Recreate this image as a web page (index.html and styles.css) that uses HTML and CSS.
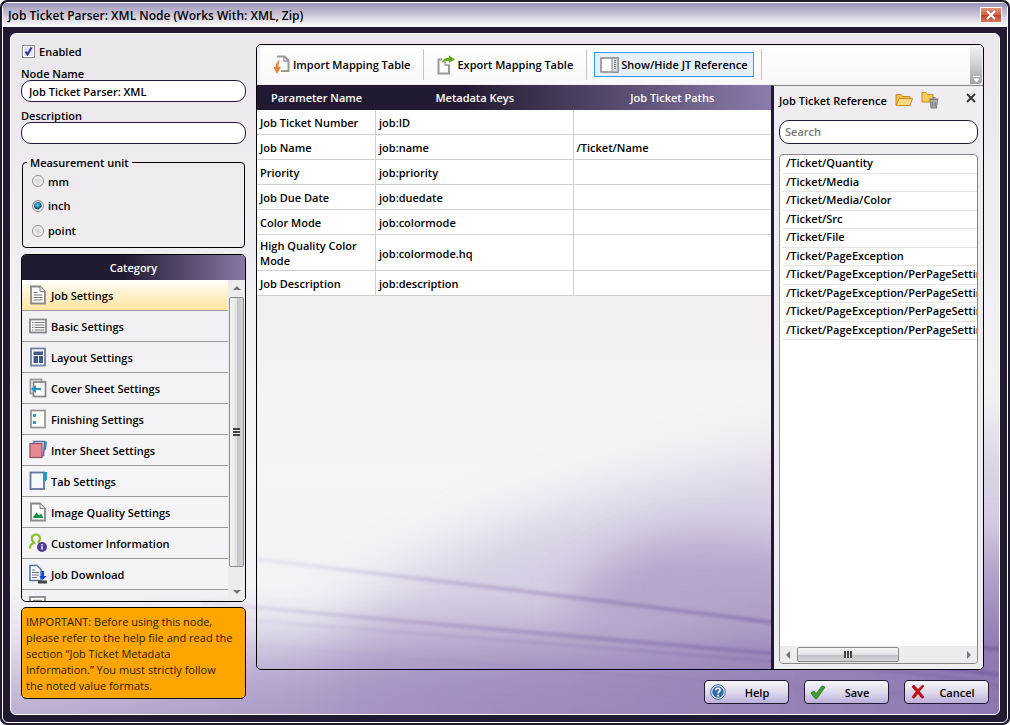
FILE: index.html
```
<!DOCTYPE html>
<html lang="en">
<head>
    <meta charset="UTF-8">
    <meta name="viewport" content="width=device-width, initial-scale=1.0">
    <title>Job Ticket Parser: XML Node</title>
    <link rel="stylesheet" href="styles.css">
</head>
<body>

<div class="window">
    <div class="frame">
        <header class="titlebar">
            <h1>Job Ticket Parser: XML Node (Works With: XML, Zip)</h1>
            <button type="button" class="window-close" aria-label="Close">
                <svg width="10" height="10" viewBox="0 0 10 10"><path d="M1 1l8 8M9 1l-8 8" stroke="#fff" stroke-width="2"/></svg>
            </button>
        </header>

        <main class="content">
            <!-- Purple wave background -->
            <svg class="backdrop" viewBox="10 33 990 681" preserveAspectRatio="none" aria-hidden="true">
                <defs>
                    <linearGradient id="base" x1="0" y1="0" x2="0" y2="1">
                        <stop offset="0" stop-color="#ece6ed"/>
                        <stop offset="0.65" stop-color="#f5f5f7"/>
                        <stop offset="0.82" stop-color="#f3f2f6"/>
                        <stop offset="1" stop-color="#cfc7de"/>
                    </linearGradient>
                    <linearGradient id="line" x1="0" y1="0" x2="1" y2="0">
                        <stop offset="0" stop-color="#8a74ad" stop-opacity="0.1"/>
                        <stop offset="1" stop-color="#765ea2" stop-opacity="0.85"/>
                    </linearGradient>
                    <linearGradient id="wave" x1="0" y1="0" x2="1" y2="0">
                        <stop offset="0" stop-color="#a08dc0" stop-opacity="0.35"/>
                        <stop offset="0.45" stop-color="#9c89bd" stop-opacity="0.85"/>
                        <stop offset="1" stop-color="#8b75af"/>
                    </linearGradient>
                    <filter id="soft" x="-20%" y="-40%" width="140%" height="180%"><feGaussianBlur stdDeviation="28"/></filter>
                    <filter id="softer" x="-20%" y="-40%" width="140%" height="180%"><feGaussianBlur stdDeviation="20"/></filter>
                    <filter id="thin" x="-5%" y="-20%" width="110%" height="140%"><feGaussianBlur stdDeviation="1.5"/></filter>
                </defs>
                <rect x="10" y="33" width="990" height="681" fill="url(#base)"/>
                <path d="M340 620C480 500 780 440 1060 430V760H340z" fill="#b3a3cb" opacity="0.45" filter="url(#soft)"/>
                <path d="M560 620C600 540 680 520 800 550L1060 540V640z" fill="#a18dbf" opacity="0.6" filter="url(#softer)"/>
                <path d="M-60 690C200 650 400 645 600 640L1060 600V800H-60z" fill="url(#wave)" filter="url(#soft)"/>
                <g fill="none" stroke="url(#line)" filter="url(#thin)">
                    <path d="M256 559Q520 590 770 622T1000 648" stroke-width="4"/>
                    <path d="M200 602Q520 632 770 653T1000 676" stroke-width="4"/>
                    <path d="M200 616Q520 642 770 661T1000 690" stroke-width="3" opacity="0.6"/>
                    <path d="M200 640Q520 670 1000 700" stroke-width="3" opacity="0.3"/>
                </g>
            </svg>

            <aside class="sidebar">
                <label class="check"><input type="checkbox" checked>Enabled</label>

                <label class="field-label" for="nodeName">Node Name</label>
                <input type="text" class="text-box" id="nodeName" value="Job Ticket Parser: XML">

                <label class="field-label description-label" for="description">Description</label>
                <input type="text" class="text-box" id="description">

                <fieldset class="units">
                    <legend>Measurement unit</legend>
                    <label><input type="radio" name="unit">mm</label>
                    <label><input type="radio" name="unit" checked>inch</label>
                    <label><input type="radio" name="unit">point</label>
                </fieldset>

                <section class="category">
                    <h2>Category</h2>
                    <div class="category-body">
                        <ul class="category-list">
                            <li><button type="button" class="selected">
                                <svg width="18" height="20" viewBox="0 0 18 20"><path d="M2 1.500h9l5 5v12H2z" fill="#fff" stroke="#888" stroke-width="1.800"/><path d="M11 1.500v5h5" fill="#ddd" stroke="#888"/><path d="M4.500 7.500h4M4.500 10h9M4.500 12.500h9M4.500 15h9" stroke="#777" stroke-width="1.200"/></svg>
                                Job Settings</button></li>
                            <li><button type="button">
                                <svg width="18" height="20" viewBox="0 0 18 20"><rect x="1" y="3.500" width="16" height="13" fill="#fff" stroke="#888" stroke-width="1.800"/><path d="M3 6.500h1.500M3 9h1.500M3 11.500h1.500M3 14h1.500M5.500 6.500h10M5.500 9h10M5.500 11.500h10M5.500 14h10" stroke="#777" stroke-width="1.200"/></svg>
                                Basic Settings</button></li>
                            <li><button type="button">
                                <svg width="18" height="20" viewBox="0 0 18 20"><rect x="2" y="1.500" width="14" height="17" fill="#fff" stroke="#6d7fa8" stroke-width="1.800"/><path d="M4.500 4.500h9.500v3.500H4.500zM4.500 9h4.500v7H4.500zM10 9h4v7h-4z" fill="#3f568f"/></svg>
                                Layout Settings</button></li>
                            <li><button type="button">
                                <svg width="18" height="20" viewBox="0 0 18 20"><rect x="1.500" y="1.500" width="11" height="14" fill="#fff" stroke="#999" stroke-width="1.800"/><rect x="4.500" y="4" width="12" height="14.500" fill="#fff" stroke="#888" stroke-width="1.800"/><path d="M2 11l5-4v3h5v2H7v3z" fill="#1d94d2"/></svg>
                                Cover Sheet Settings</button></li>
                            <li><button type="button">
                                <svg width="18" height="20" viewBox="0 0 18 20"><rect x="2" y="1.500" width="14" height="17" fill="#fff" stroke="#999" stroke-width="1.800"/><rect x="4" y="5" width="3" height="3" fill="#2a9fd6"/><rect x="4" y="12" width="3" height="3" fill="#2a9fd6"/></svg>
                                Finishing Settings</button></li>
                            <li><button type="button">
                                <svg width="18" height="20" viewBox="0 0 18 20"><path d="M14 1.500h4l-1 8-3 2z" fill="#1d9ccc"/><path d="M5 1.500h10.500l-1 14H5z" fill="#fff" stroke="#5a6f9c" stroke-width="1.500"/><rect x="1" y="3.500" width="12" height="14" fill="#e58a90" stroke="#8a5a70" stroke-width="1.300"/></svg>
                                Inter Sheet Settings</button></li>
                            <li><button type="button">
                                <svg width="18" height="20" viewBox="0 0 18 20"><path d="M13 1.500h5v7l-3 3z" fill="#1d9ccc"/><rect x="1.500" y="1.500" width="13.500" height="16.500" fill="#f4f9ff" stroke="#6578a4" stroke-width="1.800"/><path d="M14 1h4v7l-2 2z" fill="#1d9ccc"/></svg>
                                Tab Settings</button></li>
                            <li><button type="button">
                                <svg width="18" height="20" viewBox="0 0 18 20"><path d="M2 1.500h9l5 5v12H2z" fill="#fff" stroke="#888" stroke-width="1.800"/><path d="M11 1.500v5h5" fill="#ddd" stroke="#888"/><path d="M3.500 16l4-5.500 2.500 3 2-2 2.500 4.500z" fill="#119447"/></svg>
                                Image Quality Settings</button></li>
                            <li><button type="button">
                                <svg width="18" height="20" viewBox="0 0 18 20"><path d="M1 15.500c0-4 2-5 4-5.500C1 6 3 1.500 7 1.500S12.500 6 9 10" fill="none" stroke="#8cbf26" stroke-width="2.200"/><circle cx="13" cy="14" r="5" fill="#503a9b"/><path d="M13 11v1.500M13 13.200v3.300" stroke="#fff" stroke-width="1.500"/></svg>
                                Customer Information</button></li>
                            <li><button type="button">
                                <svg width="18" height="20" viewBox="0 0 18 20"><path d="M1 1.500h7l4 4v11H1z" fill="#fff" stroke="#5a6f9c" stroke-width="1.500"/><path d="M3 6h3M3 8.500h7M3 11h7M3 13.500h5" stroke="#5a6f9c" stroke-width="1.200"/><path d="M12.500 7h2.500v5h2.500l-3.700 4-3.700-4h2.400z" fill="#1243e8"/><rect x="9" y="16.500" width="9" height="3" fill="#444"/></svg>
                                Job Download</button></li>
                            <li><button type="button" aria-label="More settings">
                                <svg width="18" height="20" viewBox="0 0 18 20"><rect x="1" y="2" width="15" height="16" fill="#fff" stroke="#888" stroke-width="1.800"/><path d="M4 5.500h9M4 8.500h9" stroke="#888" stroke-width="1.500"/></svg>
                            </button></li>
                        </ul>
                        <div class="scroll vertical" aria-hidden="true">
                            <span class="arrow up"></span>
                            <span class="thumb"><i></i></span>
                            <span class="arrow down"></span>
                        </div>
                    </div>
                </section>

                <p class="notice">IMPORTANT: Before using this node,<br>please refer to the help file and read the<br>section “Job Ticket Metadata<br>Information.” You must strictly follow<br>the noted value formats.</p>
            </aside>

            <section class="mapping">
                <div class="toolbar">
                    <div class="tray">
                        <button type="button" class="tool">
                            <svg width="18" height="20" viewBox="0 0 18 20"><path d="M4 1.500h7.500l4 4V16H8" fill="#fff" stroke="#999" stroke-width="2"/><path d="M11 2v4h4.500" fill="none" stroke="#999" stroke-width="1.300"/><path d="M7 4.500C4.500 6 2.500 9 2.500 12H0.500L4 19l4-7H5.500C5.500 9 6 7 7 4.500z" fill="#f28234"/></svg>
                            Import Mapping Table</button>
                        <span class="separator"></span>
                        <button type="button" class="tool">
                            <svg width="18" height="20" viewBox="0 0 18 20"><path d="M5 4.500H1.500V18.500H12V9.500" fill="#fff" stroke="#999" stroke-width="2"/><path d="M8 6v4h4" fill="none" stroke="#999" stroke-width="1.300"/><path d="M4.500 8C6 4 9 2.800 12 2.800V0.500L18 4.200l-6 3.800V5.800C9 5.800 7 6 4.500 8z" fill="#5aad12"/></svg>
                            Export Mapping Table</button>
                        <span class="separator"></span>
                        <button type="button" class="tool active">
                            <svg width="19" height="16" viewBox="0 0 19 16"><rect x="1" y="1" width="17" height="14" fill="#fff" stroke="#888" stroke-width="1.500"/><rect x="12" y="1" width="6" height="14" fill="#ddd" stroke="#888"/><path d="M15 3v10" stroke="#555" stroke-width="1.500" stroke-dasharray="1 1"/></svg>
                            Show/Hide JT Reference</button>
                        <span class="separator"></span>
                    </div>
                    <span class="grip"><svg width="7" height="6" viewBox="0 0 7 6"><path d="M0 0.500h7M1 3h5L3.500 6z" stroke="#fff" fill="#fff"/></svg></span>
                </div>

                <div class="panes">
                    <div class="grid-pane">
                        <table>
                            <colgroup><col class="col-name"><col class="col-key"><col class="col-path"></colgroup>
                            <thead>
                                <tr><th>Parameter Name</th><th>Metadata Keys</th><th>Job Ticket Paths</th></tr>
                            </thead>
                            <tbody>
                                <tr><td>Job Ticket Number</td><td>job:ID</td><td></td></tr>
                                <tr><td>Job Name</td><td>job:name</td><td>/Ticket/Name</td></tr>
                                <tr><td>Priority</td><td>job:priority</td><td></td></tr>
                                <tr><td>Job Due Date</td><td>job:duedate</td><td></td></tr>
                                <tr><td>Color Mode</td><td>job:colormode</td><td></td></tr>
                                <tr><td>High Quality Color Mode</td><td>job:colormode.hq</td><td></td></tr>
                                <tr><td>Job Description</td><td>job:description</td><td></td></tr>
                            </tbody>
                        </table>
                    </div>

                    <aside class="reference">
                        <div class="reference-head">
                            <h2>Job Ticket Reference</h2>
                            <button type="button" class="icon-button" aria-label="Open">
                                <svg width="18" height="16" viewBox="0 0 18 16"><path d="M1 13V2.500h5l1.500 2H15V7" fill="#f5bd4f" stroke="#c98a1f"/><path d="M1 13.500L4 6.500h13.500L15 13.500z" fill="#fcd77c" stroke="#c98a1f"/></svg>
                            </button>
                            <button type="button" class="icon-button" aria-label="Remove">
                                <svg width="18" height="18" viewBox="0 0 18 18"><path d="M1 11V1.500h4l1.500 2H12V11z" fill="#fcc95d" stroke="#c98a1f"/><path d="M9 8.500h7.500l-1 8.500h-5.500z" fill="#b5b5b5" stroke="#777"/><path d="M8 8h9.500M11.500 6.500h3M11.500 10.500v5M14 10.500v5" stroke="#777" stroke-width="1.200"/></svg>
                            </button>
                            <button type="button" class="icon-button close-pane" aria-label="Close reference">
                                <svg width="10" height="10" viewBox="0 0 10 10"><path d="M1 1l8 8M9 1L1 9" stroke="#333" stroke-width="1.800"/></svg>
                            </button>
                        </div>
                        <input type="text" class="text-box search" placeholder="Search" aria-label="Search">
                        <div class="path-box">
                            <ul class="path-list">
                                <li>/Ticket/Quantity</li>
                                <li>/Ticket/Media</li>
                                <li>/Ticket/Media/Color</li>
                                <li>/Ticket/Src</li>
                                <li>/Ticket/File</li>
                                <li>/Ticket/PageException</li>
                                <li>/Ticket/PageException/PerPageSettin</li>
                                <li>/Ticket/PageException/PerPageSettin</li>
                                <li>/Ticket/PageException/PerPageSettin</li>
                                <li>/Ticket/PageException/PerPageSettin</li>
                            </ul>
                            <div class="scroll horizontal" aria-hidden="true">
                                <span class="arrow left"></span>
                                <span class="thumb"><i></i></span>
                                <span class="arrow right"></span>
                            </div>
                        </div>
                    </aside>
                </div>
            </section>

            <footer class="actions">
                <button type="button" class="action">
                    <svg width="16" height="16" viewBox="0 0 16 16"><circle cx="8" cy="8" r="7.300" fill="#fff" stroke="#2f5f9e"/><circle cx="8" cy="8" r="5.800" fill="#3468a8"/><path d="M5.800 6.300C6 3.500 10.300 3.700 10.100 6.200 10 7.600 8.100 7.800 8.100 9.500M8.100 10.800v1.700" fill="none" stroke="#fff" stroke-width="1.700"/></svg>
                    <span>Help</span></button>
                <button type="button" class="action">
                    <svg width="16" height="16" viewBox="0 0 16 16"><path d="M1 9l3-2 2 3 6-8 3 1-8 11.500H5z" fill="#3fa32f" stroke="#1d6b1a" stroke-width="0.800"/></svg>
                    <span>Save</span></button>
                <button type="button" class="action">
                    <svg width="16" height="16" viewBox="0 0 16 16"><path d="M2 3l2-2 4 4.500L12.500 1l1.500 1-4.500 5.500L14 13l-2 1.500L8 9.500 4 14.500 2 13l4-5.500z" fill="#cc0d0d" stroke="#990808" stroke-width="0.600"/></svg>
                    <span>Cancel</span></button>
            </footer>
        </main>
    </div>
</div>

</body>
</html>
```
FILE: styles.css
```
* {
    box-sizing: border-box;
}

body {
    margin: 0;
    background: #fff;
    color: #000;
    font-family: "Open Sans", "Noto Sans", sans-serif;
    font-size: 11px;
    font-weight: 600;
    line-height: 15px;
}

button, input {
    font: inherit;
    color: inherit;
    margin: 0;
}

button {
    padding: 0;
    border: none;
    background: none;
    cursor: pointer;
}

h1, h2, ul, p {
    margin: 0;
    padding: 0;
    font-size: inherit;
    font-weight: inherit;
}

ul {
    list-style: none;
}

svg {
    display: block;
    flex: none;
}

.window {
    height: 100vh;
    min-height: 560px;
    padding: 2px;
    background: #221a30;
    border-radius: 7px;
}

.frame {
    height: 100%;
    display: flex;
    flex-direction: column;
    border: 1px solid #fff;
    border-radius: 6px;
    overflow: hidden;
}

.titlebar {
    height: 24px;
    flex: none;
    display: flex;
    align-items: center;
    justify-content: space-between;
    padding: 0 5px;
    background: linear-gradient(#9c92b7, #cdc7da 50%, #fff);
}

.titlebar h1 {
    font-size: 12px;
}

.window-close {
    width: 22px;
    height: 16px;
    display: flex;
    align-items: center;
    justify-content: center;
    border: 1px solid #fff;
    background: linear-gradient(#e0947f, #cf5a40 50%, #bf3f25 50%, #d8765c);
}

.content {
    position: relative;
    flex: 1;
    min-height: 0;
    margin: 6px 7px 7px;
    padding: 10px 10px;
    display: grid;
    grid-template-columns: 225px 1fr;
    grid-template-rows: 1fr auto;
    column-gap: 10px;
    row-gap: 10px;
    border: 1px solid #fff;
    border-radius: 6px;
    background: #ece6ed;
    overflow: hidden;
}

.backdrop {
    position: absolute;
    inset: 0;
    width: 100%;
    height: 100%;
}

/* Left column */
.sidebar {
    position: relative;
    grid-row: 1 / 3;
    min-height: 0;
    display: flex;
    flex-direction: column;
    margin-bottom: 5px;
}

.check {
    display: flex;
    align-items: center;
    gap: 4px;
    margin-bottom: 8px;
}

.check input {
    appearance: none;
    width: 13px;
    height: 13px;
    margin-left: 1px;
    border: 1px solid #8a8a8a;
    background: #e3e6ee;
    box-shadow: inset 0 0 0 1px #fff;
}

.check input:checked {
    background: #dfe3ee url("data:image/svg+xml,%3Csvg xmlns='http://www.w3.org/2000/svg' viewBox='0 0 11 11'%3E%3Cpath d='M2.500 5.500l2 3 4-7' fill='none' stroke='%23303090' stroke-width='2'/%3E%3C/svg%3E");
}

.field-label {
    line-height: 13px;
}

.description-label {
    margin-top: 7px;
}

.text-box {
    width: 100%;
    height: 22px;
    padding: 0 7px;
    border: 1px solid #221a30;
    border-radius: 10px;
    background: #fff;
}

.units {
    height: 93px;
    margin: 11px 1px 6px;
    padding: 0 10px;
    border: 1px solid #000;
    border-radius: 4px;
}

.units legend {
    margin-left: -6px;
    padding: 0 3px;
}

.units label {
    display: flex;
    align-items: center;
    gap: 4px;
    height: 25px;
}

.units legend + label {
    height: 23px;
    padding-bottom: 1px;
}

.units input {
    appearance: none;
    width: 12px;
    height: 12px;
    margin-left: -1px;
    border: 1px solid #8e8f8f;
    border-radius: 50%;
    background: radial-gradient(#d0d0d0, #fff);
    box-shadow: inset 0 0 0 1px #f4f4f4;
}

.units input:checked {
    background: radial-gradient(circle at 45% 40%, #7ecdf0 0, #1978a8 35%, #0d4668 45%, #f4f4f4 60%);
}

.category {
    flex: 1;
    min-height: 0;
    display: flex;
    flex-direction: column;
    border: 1px solid #000;
    border-radius: 5px;
    overflow: hidden;
}

.category h2 {
    flex: none;
    height: 25px;
    line-height: 26px;
    text-align: center;
    color: #fff;
    background: linear-gradient(90deg, #221a30 45%, #8878a8);
}

.category-body {
    flex: 1;
    min-height: 0;
    display: flex;
}

.category-list {
    flex: 1;
    overflow: hidden;
}

.category-list li {
    border-bottom: 1px solid #999;
}

.category-list button {
    display: flex;
    align-items: center;
    gap: 4px;
    width: 100%;
    height: 30px;
    padding-left: 7px;
    text-align: left;
}

.category-list .selected {
    background: linear-gradient(#fff, #fff3d3 40%, #ffe5a0);
}

/* Scroll bars */
.scroll {
    flex: none;
    display: flex;
    align-items: center;
    background: #ececee;
}

.scroll .thumb {
    display: flex;
    align-items: center;
    justify-content: center;
    border: 1px solid #8b8b8b;
    border-radius: 2px;
}

.scroll .arrow {
    border: 4px solid transparent;
}

.vertical {
    flex-direction: column;
    width: 17px;
    padding: 2px 0 5px;
}

.vertical .thumb {
    flex: 1;
    width: 15px;
    margin: 7px 0 23px;
    background: linear-gradient(90deg, #f5f5f5, #e2e2e4 50%, #c3c3c7 55%, #d5d5d8);
}

.vertical .thumb i {
    width: 7px;
    height: 8px;
    background: repeating-linear-gradient(#444 0 2px, #eee 2px 3px);
}

.arrow.up {
    border-top: none;
    border-bottom-color: #777;
    margin-top: 4px;
}

.arrow.down {
    border-bottom: none;
    border-top-color: #777;
    margin-bottom: 2px;
}

.horizontal {
    height: 17px;
    justify-content: space-between;
    padding: 0 6px;
}

.horizontal .thumb {
    width: 102px;
    height: 15px;
    margin: 0 auto 0 7px;
    background: linear-gradient(#f5f5f5, #e2e2e4 50%, #c3c3c7 55%, #d5d5d8);
}

.horizontal .thumb i {
    width: 8px;
    height: 7px;
    background: repeating-linear-gradient(90deg, #444 0 2px, #eee 2px 3px);
}

.arrow.left {
    border-left: none;
    border-right-color: #777;
}

.arrow.right {
    border-right: none;
    border-left-color: #777;
}

.notice {
    flex: none;
    margin-top: 5px;
    padding: 6px 4px 4px;
    border: 1px solid #000;
    border-radius: 5px;
    background: #ffa500;
    color: #2b1c00;
    font-weight: 400;
    line-height: 16px;
}

/* Main panel */
.mapping {
    position: relative;
    min-height: 0;
    min-width: 0;
    margin-right: 5px;
    display: flex;
    flex-direction: column;
    border: 1px solid #000;
    border-radius: 5px;
    overflow: hidden;
}

.toolbar {
    flex: none;
    height: 40px;
    display: flex;
    padding: 1px 1px 1px 3px;
    background: #f1eff3;
}

.tray {
    flex: 1;
    display: flex;
    align-items: center;
    padding: 0 0 1px 7px;
    border-radius: 4px 0 0 4px;
    background: linear-gradient(#fff, #f8f7f9);
}

.tool {
    display: flex;
    align-items: center;
    gap: 2px;
    height: 25px;
    padding: 0 5px;
    border: 1px solid transparent;
    white-space: nowrap;
}

.tool.active {
    border-color: #3399ff;
    background: #e5f0fa;
}

.separator {
    width: 1px;
    height: 31px;
    margin: 0 7px;
    background: #c4c4c6;
}

.grip {
    width: 12px;
    display: flex;
    align-items: flex-end;
    justify-content: center;
    padding-bottom: 2px;
    border-radius: 0 4px 4px 0;
    background: linear-gradient(#f2f2f3, #cfcfd1 50%, #a0a0a3);
}

.panes {
    flex: 1;
    min-height: 0;
    display: flex;
}

.grid-pane {
    flex: 1;
    min-width: 0;
}

table {
    width: 100%;
    table-layout: fixed;
    border-collapse: separate;
    border-spacing: 0;
}

.col-name {
    width: 119px;
}

thead tr {
    height: 25px;
    color: #fff;
    background: linear-gradient(90deg, #221a30 40%, #8c7cac);
}

th {
    padding: 0;
    font-weight: 600;
}

td {
    height: 25px;
    padding: 3px 3px 2px;
    border-right: 1px solid #d0d0d0;
    border-bottom: 1px solid #d0d0d0;
    background: #fff;
    vertical-align: middle;
}

td:last-child {
    border-right: none;
}

.reference {
    flex: none;
    width: 212px;
    display: flex;
    flex-direction: column;
    padding: 0 5px 5px;
    border-left: 3px solid #221a30;
    border-top: 1px solid #888;
    background: #f0edf2;
}

.reference-head {
    height: 34px;
    padding-bottom: 6px;
    display: flex;
    align-items: center;
}

.icon-button {
    margin-left: 8px;
}

.close-pane {
    margin: 0 2px 4px auto;
}

.search {
    height: 24px;
    padding: 0 5px 2px;
}

.search::placeholder {
    color: #777;
    opacity: 1;
}

.path-box {
    flex: 1;
    min-height: 0;
    margin-top: 10px;
    display: flex;
    flex-direction: column;
    border: 1px solid #888;
    border-radius: 4px;
    background: #fff;
    overflow: hidden;
}

.path-list {
    flex: 1;
    overflow: hidden;
    padding-left: 2px;
}

.path-list li {
    height: 18px;
    padding-left: 4px;
    line-height: 16px;
    border-bottom: 1px solid #e4e4e4;
    white-space: nowrap;
}

.path-list li:nth-child(odd) {
    height: 19px;
}

/* Bottom buttons */
.actions {
    position: relative;
    display: flex;
    justify-content: flex-end;
    gap: 15px;
}

.action {
    width: 85px;
    height: 24px;
    display: flex;
    align-items: center;
    padding: 0 5px;
    border: 1px solid #221a30;
    border-radius: 4px;
    background: linear-gradient(#f8f7fb, #dedaec 50%, #bcb0dc);
}

.action span {
    flex: 1;
    padding-left: 5px;
    text-align: center;
}
```
